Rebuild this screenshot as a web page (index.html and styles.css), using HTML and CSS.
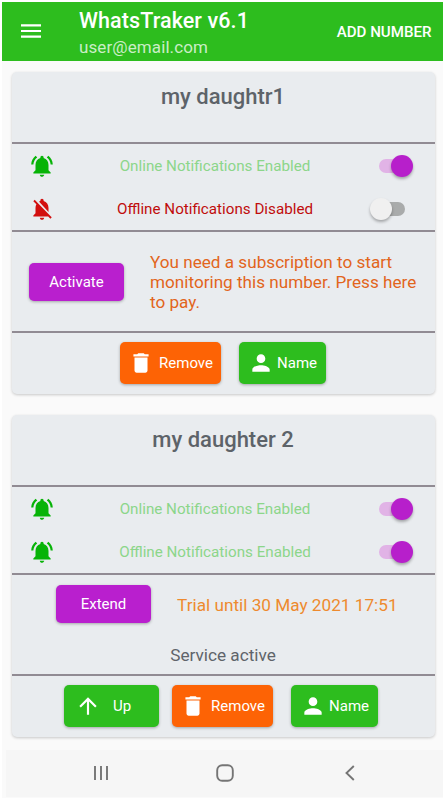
FILE: index.html
```html
<!DOCTYPE html>
<html lang="en">
<head>
<meta charset="utf-8">
<title>WhatsTraker</title>
<link rel="stylesheet" href="styles.css">
</head>
<body>
<div class="screen">
  <header class="toolbar">
    <svg class="menu-icon" viewBox="3 6 18 12"><path d="M3 18h18v-2H3v2zm0-5h18v-2H3v2zm0-7v2h18V6H3z"/></svg>
    <div class="heading">
      <div class="app-title">WhatsTraker v6.1</div>
      <div class="app-user">user@email.com</div>
    </div>
    <div class="add-number">ADD NUMBER</div>
  </header>
  <main class="content">
    <section class="card">
      <h2 class="card-title">my daughtr1</h2>
      <div class="notifications">
        <div class="notif-row">
          <svg class="bell bell-on" viewBox="0 0 24 24"><path d="M7.58 4.08L6.15 2.65C3.75 4.48 2.17 7.3 2.03 10.5h2c.15-2.65 1.51-4.97 3.55-6.42zm12.39 6.42h2c-.15-3.2-1.73-6.02-4.12-7.85l-1.42 1.43c2.02 1.45 3.39 3.77 3.54 6.42zM18 11c0-3.07-1.64-5.64-4.5-6.32V4c0-.83-.67-1.5-1.5-1.5s-1.5.67-1.5 1.5v.68C7.63 5.36 6 7.92 6 11v5l-2 2v1h16v-1l-2-2v-5zm-6 11c.14 0 .27-.01.4-.04.65-.14 1.18-.58 1.44-1.18.1-.24.15-.5.15-.78h-4c.01 1.1.9 2 2.01 2z"/></svg>
          <span class="notif-text text-on">Online Notifications Enabled</span>
          <span class="toggle toggle-on"><span class="thumb"></span></span>
        </div>
        <div class="notif-row">
          <svg class="bell bell-off" viewBox="0 0 24 24"><path d="M20 18.69L7.84 6.14 5.27 3.49 4 4.76l2.8 2.8v.01c-.52.99-.8 2.16-.8 3.42v5l-2 2v1h13.73l2 2L21 19.72l-1-1.03zM12 22c1.11 0 2-.89 2-2h-4c0 1.11.89 2 2 2zm6-7.32V11c0-3.08-1.64-5.64-4.5-6.32V4c0-.83-.67-1.5-1.5-1.5s-1.5.67-1.5 1.5v.68c-.15.03-.29.08-.42.12-.1.03-.2.07-.3.11h-.01c-.2.08-.4.17-.59.27-.01 0-.01 0-.02.01L18 14.68z"/></svg>
          <span class="notif-text text-off">Offline Notifications Disabled</span>
          <span class="toggle toggle-off"><span class="thumb"></span></span>
        </div>
      </div>
      <div class="subscribe">
        <button class="btn btn-purple btn-activate">Activate</button>
        <p class="subscribe-text">You need a subscription to start monitoring this number. Press here to pay.</p>
      </div>
      <div class="actions">
        <button class="btn btn-orange btn-remove"><svg class="btn-icon" viewBox="0 0 24 24"><path d="M6 19c0 1.1.9 2 2 2h8c1.1 0 2-.9 2-2V7H6v12zM19 4h-3.5l-1-1h-5l-1 1H5v2h14V4z"/></svg>Remove</button>
        <button class="btn btn-green btn-name"><svg class="btn-icon" viewBox="0 0 24 24"><path d="M12 12c2.21 0 4-1.79 4-4s-1.79-4-4-4-4 1.79-4 4 1.79 4 4 4zm0 2c-2.67 0-8 1.34-8 4v2h16v-2c0-2.66-5.33-4-8-4z"/></svg>Name</button>
      </div>
    </section>
    <section class="card">
      <h2 class="card-title">my daughter 2</h2>
      <div class="notifications">
        <div class="notif-row">
          <svg class="bell bell-on" viewBox="0 0 24 24"><path d="M7.58 4.08L6.15 2.65C3.75 4.48 2.17 7.3 2.03 10.5h2c.15-2.65 1.51-4.97 3.55-6.42zm12.39 6.42h2c-.15-3.2-1.73-6.02-4.12-7.85l-1.42 1.43c2.02 1.45 3.39 3.77 3.54 6.42zM18 11c0-3.07-1.64-5.64-4.5-6.32V4c0-.83-.67-1.5-1.5-1.5s-1.5.67-1.5 1.5v.68C7.63 5.36 6 7.92 6 11v5l-2 2v1h16v-1l-2-2v-5zm-6 11c.14 0 .27-.01.4-.04.65-.14 1.18-.58 1.44-1.18.1-.24.15-.5.15-.78h-4c.01 1.1.9 2 2.01 2z"/></svg>
          <span class="notif-text text-on">Online Notifications Enabled</span>
          <span class="toggle toggle-on"><span class="thumb"></span></span>
        </div>
        <div class="notif-row">
          <svg class="bell bell-on" viewBox="0 0 24 24"><path d="M7.58 4.08L6.15 2.65C3.75 4.48 2.17 7.3 2.03 10.5h2c.15-2.65 1.51-4.97 3.55-6.42zm12.39 6.42h2c-.15-3.2-1.73-6.02-4.12-7.85l-1.42 1.43c2.02 1.45 3.39 3.77 3.54 6.42zM18 11c0-3.07-1.64-5.64-4.5-6.32V4c0-.83-.67-1.5-1.5-1.5s-1.5.67-1.5 1.5v.68C7.63 5.36 6 7.92 6 11v5l-2 2v1h16v-1l-2-2v-5zm-6 11c.14 0 .27-.01.4-.04.65-.14 1.18-.58 1.44-1.18.1-.24.15-.5.15-.78h-4c.01 1.1.9 2 2.01 2z"/></svg>
          <span class="notif-text text-on">Offline Notifications Enabled</span>
          <span class="toggle toggle-on"><span class="thumb"></span></span>
        </div>
      </div>
      <div class="service">
        <div class="trial">
          <button class="btn btn-purple btn-activate">Extend</button>
          <span class="trial-text">Trial until 30 May 2021 17:51</span>
        </div>
        <div class="service-status">Service active</div>
      </div>
      <div class="actions actions-three">
        <button class="btn btn-green btn-up"><svg class="btn-icon" viewBox="0 0 24 24"><path d="M4 12l1.41 1.41L11 7.83V20h2V7.83l5.58 5.59L20 12l-8-8-8 8z"/></svg><span class="up-label">Up</span></button>
        <button class="btn btn-orange btn-remove"><svg class="btn-icon" viewBox="0 0 24 24"><path d="M6 19c0 1.1.9 2 2 2h8c1.1 0 2-.9 2-2V7H6v12zM19 4h-3.5l-1-1h-5l-1 1H5v2h14V4z"/></svg>Remove</button>
        <button class="btn btn-green btn-name"><svg class="btn-icon" viewBox="0 0 24 24"><path d="M12 12c2.21 0 4-1.79 4-4s-1.79-4-4-4-4 1.79-4 4 1.79 4 4 4zm0 2c-2.67 0-8 1.34-8 4v2h16v-2c0-2.66-5.33-4-8-4z"/></svg>Name</button>
      </div>
    </section>
  </main>
  <nav class="navbar">
    <svg class="nav-icon nav-recent" viewBox="0 0 16 16"><path d="M2 1v14M8 1v14M14 1v14"/></svg>
    <svg class="nav-icon nav-home" viewBox="0 0 18 18"><rect x="1.2" y="1.2" width="15.6" height="15.6" rx="5"/></svg>
    <svg class="nav-icon nav-back" viewBox="0 0 10 16"><path d="M8.8 1L1.5 8l7.3 7"/></svg>
  </nav>
</div>
</body>
</html>
```
FILE: styles.css
```css
* { box-sizing: border-box; }
html, body { margin: 0; padding: 0; background: #fff; }
body { font-family: Roboto, "Liberation Sans", sans-serif; }

.screen {
  width: 441px;
  height: 796px;
  margin: 2px 0 0 2px;
  background: #fafafa;
  display: flex;
  flex-direction: column;
  overflow: hidden;
}

.toolbar {
  flex: 0 0 59px;
  width: 440.5px;
  background: #2dbd1e;
  color: #fff;
  display: flex;
  align-items: center;
  padding: 0 11px 0 19px;
}
.menu-icon { width: 20px; height: 14px; fill: #fff; flex: none; margin-top: -1px; }
.heading { margin-left: 38px; flex: 1; padding-top: 4px; }
.app-title { font-size: 21.5px; font-weight: 500; line-height: 26px; letter-spacing: .1px; }
.app-user { font-size: 17px; line-height: 26px; color: rgba(255,255,255,.75); letter-spacing: .1px; }
.add-number { font-size: 15.1px; font-weight: 500; }

.content {
  flex: 1;
  min-height: 0;
  display: flex;
  flex-direction: column;
  gap: 21.5px;
  padding: 11px 7.5px 0 9.5px;
  width: 440px;
}

.card {
  flex: none;
  background: #e9ecef;
  border-radius: 5px;
  box-shadow: 0 1px 3px rgba(0,0,0,.2);
  height: 321.5px;
}
.card-title {
  margin: 0;
  box-sizing: content-box;
  height: 58px;
  padding-top: 12px;
  text-align: center;
  font-size: 22px;
  line-height: 26px;
  font-weight: 500;
  color: #5d6369;
  border-bottom: 2px solid #918b93;
}

.notifications { border-bottom: 2px solid #918b93; height: 88px; }
.notif-row { display: flex; align-items: center; height: 43px; padding-left: 17px; }
.bell { width: 26px; height: 26px; flex: none; }
.bell-on { fill: #07b307; }
.bell-off { fill: #d20f0f; }
.notif-text { flex: 1; text-align: center; font-size: 15.2px; padding-right: 3px; }
.text-on { color: #8cd68a; }
.text-off { color: #c00c0c; }

.toggle {
  position: relative;
  flex: none;
  width: 26px;
  height: 14px;
  border-radius: 7px;
  margin-right: 30px;
}
.thumb {
  position: absolute;
  top: -4px;
  width: 22px;
  height: 22px;
  border-radius: 50%;
  box-shadow: 0 2px 3px rgba(0,0,0,.3);
}
.toggle-on { background: #e1b3e6; }
.toggle-on .thumb { right: -8px; background: #b71fcb; }
.toggle-off { background: #a9abab; }
.toggle-off .thumb { left: -9px; background: #f0f0f0; }

.btn {
  border: 0;
  border-radius: 5px;
  color: #fff;
  font: 400 15px Roboto, "Liberation Sans", sans-serif;
  display: inline-flex;
  align-items: center;
  justify-content: center;
  padding: 0;
  box-shadow: 0 1px 3px rgba(0,0,0,.3);
}
.btn-purple { background: #b91fce; }
.btn-orange { background: #fd6305; }
.btn-green { background: #2dbd1e; }
.btn-activate { width: 95px; height: 38px; flex: none; }
.btn-remove { width: 101px; height: 42px; gap: 5px; }
.btn-name { width: 87px; height: 42px; gap: 3px; }
.btn-up { width: 95px; height: 42px; gap: 12px; padding-left: 11px; justify-content: flex-start; }
.btn-icon { width: 26px; height: 26px; fill: #fff; flex: none; }

.subscribe {
  display: flex;
  align-items: center;
  gap: 26px;
  height: 101px;
  padding: 0 17px 0 17.5px;
  border-bottom: 2px solid #918b93;
}
.subscribe-text { margin: 0; font-size: 17.15px; line-height: 20px; color: #e2651c; }

.service { height: 101px; border-bottom: 2px solid #918b93; }
.trial { display: flex; align-items: center; gap: 26px; padding: 10px 0 0 44.5px; }
.trial-text { font-size: 17.2px; color: #ee8a2e; padding-top: 1px; }
.service-status { margin-top: 21px; text-align: center; font-size: 17.2px; line-height: 22px; color: #5f646a; }

.actions { display: flex; justify-content: center; gap: 18px; padding-top: 9px; }
.actions-three { gap: 13px; padding-right: 4px; }
.actions-three .btn-name { margin-left: 5px; }

.navbar {
  flex: 0 0 47px;
  margin: 0 0 1px 4px;
  background: #f6f6f6;
  display: flex;
  align-items: center;
  padding: 0 0 1px 87px;
}
.nav-icon { fill: none; stroke: #757575; stroke-width: 1.9; flex: none; }
.nav-recent { width: 16px; height: 16px; }
.nav-home { width: 18px; height: 18px; margin-left: 107px; }
.nav-back { width: 10px; height: 16px; margin-left: 111px; }
```
